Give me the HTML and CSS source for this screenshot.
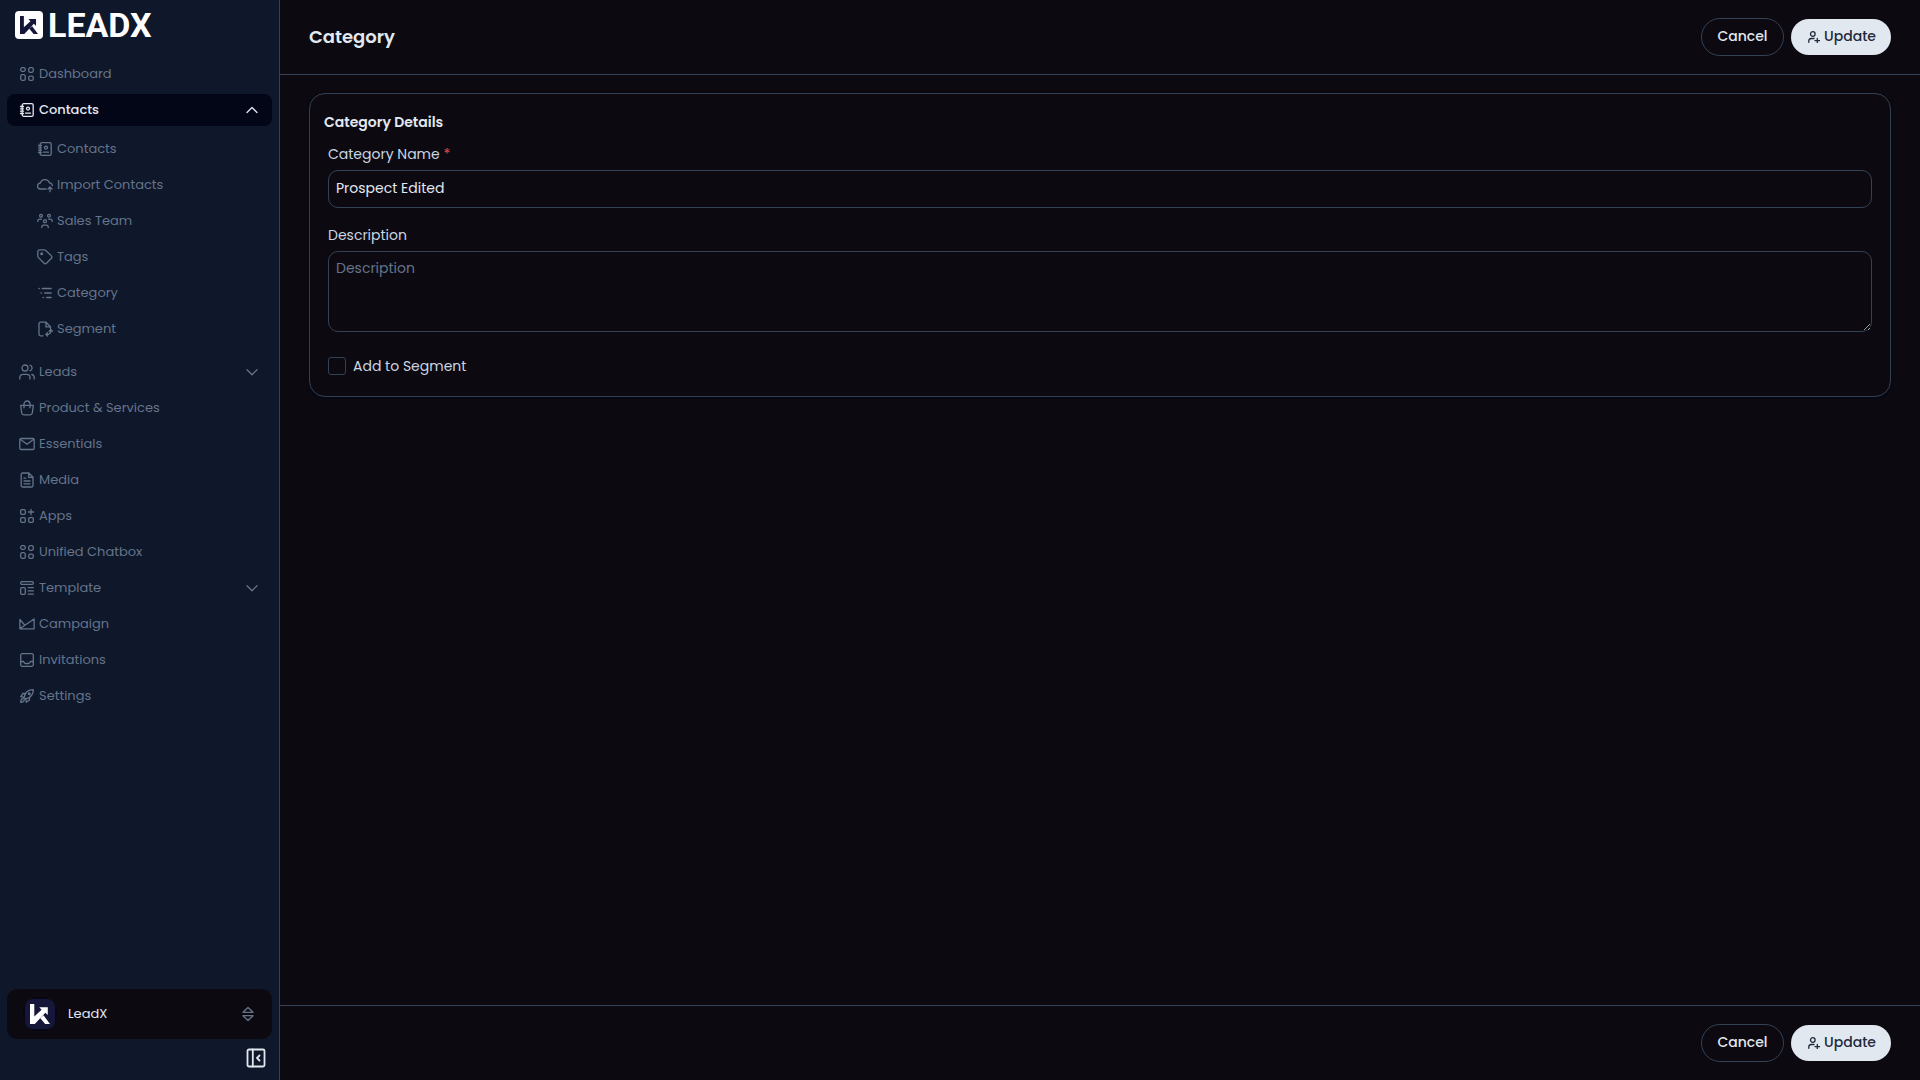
FILE: index.html
```html
<!DOCTYPE html>
<html lang="en">
<head>
<meta charset="utf-8">
<meta name="viewport" content="width=device-width, initial-scale=1">
<title>Category - LeadX</title>
<link rel="stylesheet" href="styles.css">
</head>
<body>
<svg class="sprite" aria-hidden="true">
  <symbol id="i-grid" viewBox="0 0 16 16"><rect x="1.7" y="1.7" width="4.6" height="3.6" rx="1.5"/><rect x="9.7" y="1.7" width="4.6" height="4.6" rx="1.6"/><rect x="1.7" y="8.7" width="4.6" height="5.6" rx="1.6"/><rect x="9.7" y="10.2" width="4.6" height="4.1" rx="1.6"/></symbol>
  <symbol id="i-contacts" viewBox="0 0 16 16"><rect x="3.2" y="1.7" width="11" height="12.6" rx="1.6"/><path d="M1.5 4.5h3M1.5 6.8h3M1.5 9.2h3M1.5 11.5h3M6.5 11.2h5"/><circle cx="9" cy="6.6" r="1.5"/></symbol>
  <symbol id="i-cloud" viewBox="0 0 16 16"><path d="M9 12H3.7A3 3 0 0 1 3.4 6a4.7 4.7 0 0 1 9-.2A3 3 0 0 1 15.3 8.5M13 14.7v-4.6M11 12l2-2 2 2"/></symbol>
  <symbol id="i-team" viewBox="0 0 16 16"><circle cx="4" cy="2.8" r="1.4"/><circle cx="12" cy="2.8" r="1.4"/><circle cx="8" cy="8.2" r="1.5"/><path d="M.8 8.4V7.9A2 2 0 0 1 2.8 6.2H4.5M15.2 8.4V7.9A2 2 0 0 0 13.2 6.2H11.5M4.8 14.6V13.7a1.8 1.8 0 0 1 1.8-1.5H9.4a1.8 1.8 0 0 1 1.8 1.5v.9"/></symbol>
  <symbol id="i-tag" viewBox="0 0 16 16"><path d="M.8 2.7V7.2c0 .5.2.9.5 1.2l5.8 5.8c.8.8 1.7.8 2.4 0l4.9-4.9c.8-.7.8-1.6 0-2.4L8.500 1.200C8.200.9 7.800.8 7.300.8H2.700A1.900 1.900 0 0 0 .8 2.700Z"/><circle cx="4.700" cy="4.700" r=".9"/></symbol>
  <symbol id="i-list" viewBox="0 0 16 16"><path d="M2 3.500h.3M5.200 3.500h9M4 8h.3M7.700 8h6.500M6.200 12.500h.3M9.700 12.500h4.500"/></symbol>
  <symbol id="i-segment" viewBox="0 0 16 16"><path d="M6 14.800H3.500A1.500 1.500 0 0 1 2 13.300V2.700a1.500 1.500 0 0 1 1.500-1.500H9l4.500 4.500v1.800M9 1.300v4.500h4.500M12.200 10.200l1.600-1.700 1.600 1.700M13.800 8.700v1.600a2.500 2.500 0 0 1-1.400 2.300M10.500 11.800l-1.700 1.600 1.700 1.600M9 13.400h2.500"/></symbol>
  <symbol id="i-users" viewBox="0 0 16 16"><circle cx="6" cy="4" r="3"/><path d="M.8 15v-1.500a3.200 3.200 0 0 1 3.200-3.200h3.800A3.200 3.200 0 0 1 11 13.500V15M11 1.200a3 3 0 0 1 0 5.700M12.800 10.500A3.200 3.200 0 0 1 15.200 13.600V15"/></symbol>
  <symbol id="i-bag" viewBox="0 0 16 16"><path d="M1.700 5.300h12.600l-1 7.700a2.200 2.200 0 0 1-2.200 1.900H4.900A2.200 2.200 0 0 1 2.700 13ZM5 7.800V4a3 3 0 0 1 6 0v3.800"/></symbol>
  <symbol id="i-mail" viewBox="0 0 16 16"><rect x=".8" y="2.500" width="14.400" height="11" rx="1.300"/><path d="m1.200 3.300 6.800 5 6.800-5"/></symbol>
  <symbol id="i-file" viewBox="0 0 16 16"><path d="M3.700 1h6L14 5.200v8.300a1.500 1.500 0 0 1-1.500 1.500H3.700a1.500 1.500 0 0 1-1.500-1.500v-11A1.500 1.500 0 0 1 3.700 1ZM9.700 1v4.300H14M5 6.200h1.700M5 9h6M5 11.800h6"/></symbol>
  <symbol id="i-apps" viewBox="0 0 16 16"><rect x="1.700" y="1.700" width="4.600" height="4.600" rx="1"/><rect x="1.700" y="9.700" width="4.600" height="4.600" rx="1"/><rect x="9.700" y="9.700" width="4.600" height="4.600" rx="1"/><path d="M12 1.300v5.400M9.300 4h5.400"/></symbol>
  <symbol id="i-template" viewBox="0 0 16 16"><rect x="1.700" y="1.700" width="12.600" height="2.600" rx="1"/><rect x="1.700" y="7.700" width="4.600" height="6.600" rx="1"/><path d="M9.300 7.700h5M9.300 10.900h5M9.300 14.200h5"/></symbol>
  <symbol id="i-campaign" viewBox="0 0 16 16"><path d="M.9 3.500v9.300h14.200V3L5.800 9.200ZM.9 12.700l4.900-3.500"/></symbol>
  <symbol id="i-inbox" viewBox="0 0 16 16"><rect x="1.700" y="1.700" width="12.600" height="12.600" rx="1.500"/><path d="M1.700 9.500h2.600c.7 0 .8 2 2.200 2h3c1.400 0 1.500-2 2.200-2h2.600"/></symbol>
  <symbol id="i-rocket" viewBox="0 0 16 16"><path d="M5 9.500C6 5 9 1.700 14.300 1.700 14.300 7 11 10 6.500 11ZM6.700 5.500H4L1.700 8.700 5 9.300M10.500 9.300V12l-3.200 2.300L6.700 11M4.200 10.700c-1.700.1-2.500 1.500-2.500 3.600 2.100 0 3.500-.8 3.600-2.500"/><circle cx="10.300" cy="5.700" r=".9"/></symbol>
  <symbol id="i-down" viewBox="0 0 16 16"><path d="m3 5.700 5 5 5-5"/></symbol>
  <symbol id="i-up" viewBox="0 0 16 16"><path d="m3 10.500 5-5 5 5"/></symbol>
  <symbol id="i-useradd" viewBox="0 0 12 12"><circle cx="4.800" cy="3" r="2.300"/><path d="M.8 11.300V9.800A2.500 2.500 0 0 1 3.300 7.500H6M9.300 7.300v4.600M7 9.600h4.600"/></symbol>
  <symbol id="i-sort" viewBox="0 0 14 16"><path d="M7 1.500 12 6.300H2ZM2 9.700h10L7 14.500Z"/></symbol>
  <symbol id="i-panel" viewBox="0 0 20 20"><rect x="1.500" y="1.500" width="17" height="17" rx="1.500"/><path d="M6.800 1.500v17M13.500 7.500 11 10l2.500 2.500"/></symbol>
  <symbol id="i-mark" viewBox="0 0 20 20"><path d="M0 0h4.300v12.500L11.600 5.800 9.300 3.300h8.500V11L15.400 8.700 4.800 20H0ZM10.300 14.300l3.200-3L20 20h-4.800Z"/></symbol>
</svg>
<div class="app">
  <aside class="sidebar">
    <a class="brand" href="#"><span class="brand-mark"><svg><use href="#i-mark"/></svg></span><span class="brand-name">LEADX</span></a>
    <nav class="nav" aria-label="Main">
      <a class="nav-item" href="#"><svg class="icon"><use href="#i-grid"/></svg>Dashboard</a>
      <button class="nav-item active" type="button" aria-expanded="true"><svg class="icon"><use href="#i-contacts"/></svg>Contacts<svg class="icon chevron"><use href="#i-up"/></svg></button>
      <div class="subnav">
        <a class="nav-item" href="#"><svg class="icon"><use href="#i-contacts"/></svg>Contacts</a>
        <a class="nav-item" href="#"><svg class="icon"><use href="#i-cloud"/></svg>Import Contacts</a>
        <a class="nav-item" href="#"><svg class="icon"><use href="#i-team"/></svg>Sales Team</a>
        <a class="nav-item" href="#"><svg class="icon"><use href="#i-tag"/></svg>Tags</a>
        <a class="nav-item" href="#"><svg class="icon"><use href="#i-list"/></svg>Category</a>
        <a class="nav-item" href="#"><svg class="icon"><use href="#i-segment"/></svg>Segment</a>
      </div>
      <button class="nav-item" type="button" aria-expanded="false"><svg class="icon"><use href="#i-users"/></svg>Leads<svg class="icon chevron"><use href="#i-down"/></svg></button>
      <a class="nav-item" href="#"><svg class="icon"><use href="#i-bag"/></svg>Product &amp; Services</a>
      <a class="nav-item" href="#"><svg class="icon"><use href="#i-mail"/></svg>Essentials</a>
      <a class="nav-item" href="#"><svg class="icon"><use href="#i-file"/></svg>Media</a>
      <a class="nav-item" href="#"><svg class="icon"><use href="#i-apps"/></svg>Apps</a>
      <a class="nav-item" href="#"><svg class="icon"><use href="#i-grid"/></svg>Unified Chatbox</a>
      <button class="nav-item" type="button" aria-expanded="false"><svg class="icon"><use href="#i-template"/></svg>Template<svg class="icon chevron"><use href="#i-down"/></svg></button>
      <a class="nav-item" href="#"><svg class="icon"><use href="#i-campaign"/></svg>Campaign</a>
      <a class="nav-item" href="#"><svg class="icon"><use href="#i-inbox"/></svg>Invitations</a>
      <a class="nav-item" href="#"><svg class="icon"><use href="#i-rocket"/></svg>Settings</a>
    </nav>
    <div class="sidebar-foot">
      <button class="account" type="button"><span class="avatar"><span class="avatar-tile"><svg><use href="#i-mark"/></svg></span></span>LeadX<svg class="icon sort"><use href="#i-sort"/></svg></button>
      <button class="collapse" type="button" aria-label="Collapse sidebar"><svg class="icon"><use href="#i-panel"/></svg></button>
    </div>
  </aside>
  <div class="page">
    <header class="bar bar-top">
      <h1>Category</h1>
      <div class="actions">
        <button class="btn btn-outline" type="button">Cancel</button>
        <button class="btn btn-primary" type="submit" form="category-form"><svg class="icon"><use href="#i-useradd"/></svg>Update</button>
      </div>
    </header>
    <main class="content">
      <form class="card" id="category-form">
        <h2>Category Details</h2>
        <div class="fields">
          <div class="field">
            <label for="name">Category Name <span class="required">*</span></label>
            <input class="control" id="name" type="text" value="Prospect Edited">
          </div>
          <div class="field">
            <label for="description">Description</label>
            <textarea class="control" id="description" placeholder="Description"></textarea>
          </div>
          <div class="check">
            <input id="segment" type="checkbox">
            <label for="segment">Add to Segment</label>
          </div>
        </div>
      </form>
    </main>
    <footer class="bar bar-bottom">
      <div class="actions">
        <button class="btn btn-outline" type="button">Cancel</button>
        <button class="btn btn-primary" type="submit" form="category-form"><svg class="icon"><use href="#i-useradd"/></svg>Update</button>
      </div>
    </footer>
  </div>
</div>
</body>
</html>
```
FILE: styles.css
```css
:root {
  --bg: #0c0a10;
  --panel: #0f172a;
  --deep: #020617;
  --line: #334155;
  --muted: #64748b;
  --text: #e2e8f0;
}

* { box-sizing: border-box; }

body {
  margin: 0;
  background: var(--bg);
  color: var(--text);
  font: 14px/20px Poppins, Inter, sans-serif;
}

h1, h2 { margin: 0; font-weight: 600; }
button, input, textarea { font: inherit; color: inherit; }
button { cursor: pointer; }
a { color: inherit; text-decoration: none; }

.sprite { display: none; }

.icon {
  flex: none;
  width: 16px;
  height: 16px;
  fill: none;
  stroke: currentColor;
  stroke-width: 1.3;
  stroke-linecap: round;
  stroke-linejoin: round;
}

.app { display: flex; min-height: 100vh; }

/* Sidebar */
.sidebar {
  display: flex;
  flex: none;
  flex-direction: column;
  width: 280px;
  padding: 10px 7px 12px;
  background: var(--panel);
  border-right: 1px solid var(--line);
}

.brand {
  display: flex;
  align-items: center;
  gap: 5px;
  height: 30px;
  padding-left: 8px;
}

.brand-mark {
  display: grid;
  place-items: center;
  width: 28px;
  height: 28px;
  border-radius: 4px;
  background: #fff;
}

.brand-mark svg { width: 18px; height: 18px; fill: #15163a; }

.brand-name {
  color: #fff;
  font: 700 34px/30px Roboto, sans-serif;
}

.nav {
  display: flex;
  flex-direction: column;
  gap: 4px;
  margin-top: 18px;
}

.nav-item {
  display: flex;
  align-items: center;
  gap: 4px;
  width: 100%;
  height: 32px;
  padding: 0 12px;
  border: 0;
  border-radius: 8px;
  background: none;
  color: var(--muted);
  font-size: 13px;
  text-align: left;
}

.nav-item.active { background: var(--deep); color: var(--text); font-weight: 500; }
.chevron { margin-left: auto; }

.subnav {
  display: flex;
  flex-direction: column;
  gap: 4px;
  padding: 3px 0 7px 18px;
}

.sidebar-foot {
  display: flex;
  flex-direction: column;
  align-items: flex-end;
  gap: 9px;
  margin-top: auto;
}

.account {
  display: flex;
  align-items: center;
  gap: 11px;
  width: 100%;
  height: 50px;
  padding: 0 17px 0 16px;
  border: 0;
  border-radius: 10px;
  background: var(--bg);
  font-size: 13px;
}

.avatar {
  display: grid;
  place-items: center;
  width: 34px;
  height: 34px;
  border-radius: 50%;
  background: var(--deep);
}

.avatar-tile {
  display: grid;
  place-items: center;
  width: 30px;
  height: 30px;
  border-radius: 8px;
  background: #15163a;
}

.avatar svg { width: 20px; height: 20px; fill: #fff; }
.sort { width: 14px; margin-left: auto; color: var(--muted); }

.collapse {
  display: flex;
  margin-right: 6px;
  padding: 0;
  border: 0;
  background: none;
}

.collapse .icon { width: 20px; height: 20px; stroke-width: 1.8; }

/* Page */
.page {
  display: flex;
  flex: 1;
  flex-direction: column;
  min-width: 0;
}

.bar {
  display: flex;
  align-items: center;
  justify-content: space-between;
  padding: 18px 29px;
}

.bar-top { border-bottom: 1px solid var(--line); }
.bar-bottom { justify-content: flex-end; border-top: 1px solid var(--line); }
.bar h1 { font-size: 18px; line-height: 28px; }

.actions { display: flex; align-items: center; gap: 7px; }

.btn {
  display: flex;
  align-items: center;
  justify-content: center;
  gap: 4px;
  height: 36px;
  padding: 0 14px 2px 16px;
  border: 0;
  border-radius: 19px;
  font-weight: 500;
}

.btn-outline {
  min-width: 83px;
  height: 38px;
  padding: 0 15px 2px;
  border: 1px solid var(--line);
  background: none;
}

.btn-primary { min-width: 100px; background: #e2e8f0; color: #1e293b; }
.btn .icon { width: 12px; height: 12px; margin-top: 2px; }

.content { flex: 1; padding: 18px 29px; }

.card {
  padding: 18px 14px 20px;
  border: 1px solid var(--line);
  border-radius: 16px;
  box-shadow: 0 1px 3px var(--deep);
}

.card h2 { font-size: 14px; line-height: 20px; }

.fields {
  display: flex;
  flex-direction: column;
  gap: 17px;
  padding: 12px 4px 0;
}

.field { display: flex; flex-direction: column; gap: 6px; }
.field label, .check label { color: #cbd5e1; }
.required { color: #ef4444; }

.control {
  width: 100%;
  height: 38px;
  padding: 6px 7px 8px;
  border: 1px solid var(--line);
  border-radius: 10px;
  background: none;
  outline: 0;
}

textarea.control { height: 81px; resize: vertical; }
.control::placeholder { color: var(--muted); }

.check { display: flex; align-items: center; gap: 7px; padding-top: 7px; }

.check input {
  appearance: none;
  width: 18px;
  height: 18px;
  margin: 0;
  border: 1px solid var(--line);
  border-radius: 3px;
}

.check input:checked { background: var(--text); }
```
